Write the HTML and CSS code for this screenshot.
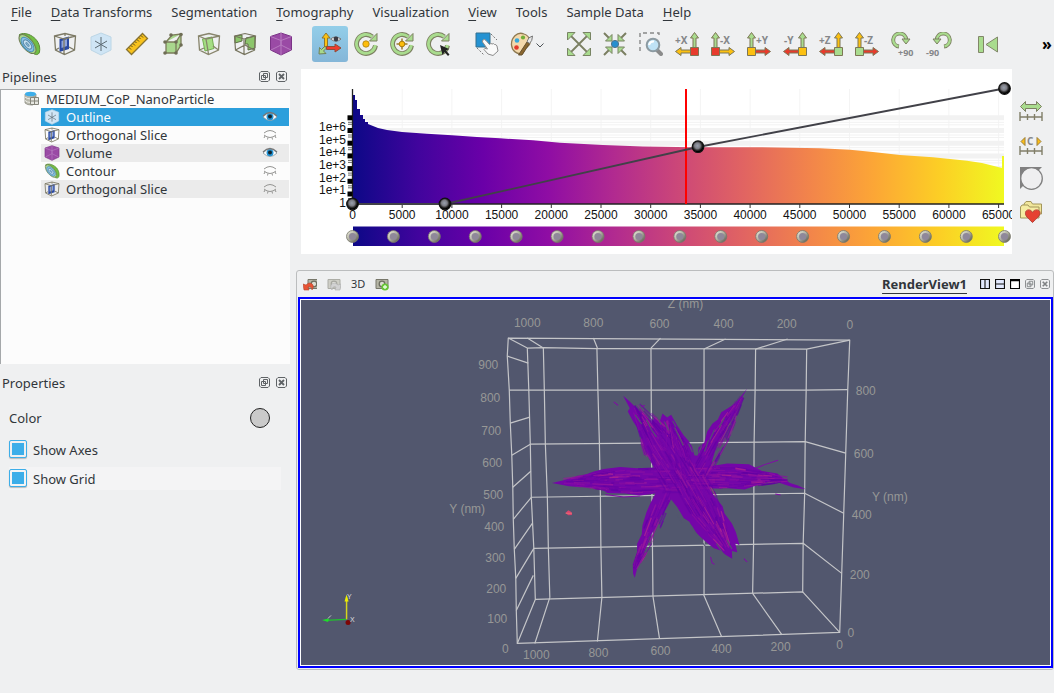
FILE: index.html
```html
<!DOCTYPE html>
<html lang="en">
<head>
<meta charset="utf-8">
<title>MEDIUM_CoP_NanoParticle</title>
<link rel="stylesheet" href="styles.css">
</head>
<body>
<svg class="sprite" aria-hidden="true">
  <defs>
    <linearGradient id="plasma">
      <stop offset="0" stop-color="#0d0887"/><stop offset=".1" stop-color="#41049d"/><stop offset=".2" stop-color="#6a00a8"/><stop offset=".3" stop-color="#8f0da4"/><stop offset=".4" stop-color="#b12a90"/><stop offset=".5" stop-color="#cc4778"/><stop offset=".6" stop-color="#e16462"/><stop offset=".7" stop-color="#f2844b"/><stop offset=".8" stop-color="#fca636"/><stop offset=".9" stop-color="#fcce25"/><stop offset="1" stop-color="#f0f921"/>
    </linearGradient>
    <linearGradient id="plasma-area" href="#plasma" gradientUnits="userSpaceOnUse" x1="353" x2="1004" y1="0" y2="0"/>
    <symbol id="contour" viewBox="0 0 24 24"><path d="M2 3C8-2 25 6 22.500 20 21.500 23.500 18 23 16 21Z" fill="#72bf44" stroke="#5d8a3a"/><ellipse cx="10.500" cy="12" rx="5.500" ry="11.500" transform="rotate(-40 10.500 12)" fill="#a9d58c" stroke="#6e7b52"/><ellipse cx="10.500" cy="12.500" rx="4.500" ry="8.500" transform="rotate(-40 10.500 12.500)" fill="#8bc0e6" stroke="#4a93bd"/><ellipse cx="10.500" cy="12.500" rx="2.800" ry="5.500" transform="rotate(-40 10.500 12.500)" fill="#c5e0f1" stroke="#5888a5"/><ellipse cx="10.500" cy="12.500" rx="1" ry="2.500" transform="rotate(-40 10.500 12.500)" fill="#7fb0d2" stroke="#5888a5" stroke-width=".7"/></symbol>
    <symbol id="slice" viewBox="0 0 24 24"><path d="M6.500 7 16 4.500V17L6.500 20Z" fill="#2b4aa3"/><path d="M8.500 9 14 7V14L8.500 16Z" fill="#8fa4dc"/><path d="M1.500 4 12 1.500 22.500 4 21.500 18 11.500 22.500 2.500 18ZM1.500 4 11 7 22.500 4M11 7V22M12 1.500V4M2.500 18 6 16M16 15 21.500 18" fill="none" stroke="#7d7a66" stroke-width="1.300"/></symbol>
    <symbol id="outline" viewBox="0 0 24 24"><path d="M12 1 22 5V18L12 23 2 18V5Z" fill="#cfe5f5" stroke="#bcd6e6"/><path d="M12 5V19M6 9 18 16M6 16 18 9" stroke="#5d6b73" fill="none"/></symbol>
    <symbol id="ruler" viewBox="0 0 24 24"><path d="M17.500 1.500 22.500 6.500 6.500 22.500 1.500 17.500Z" fill="#f8c21c" stroke="#8a7430" stroke-width="1.300"/><path d="M4 15.500 6 17.500M6 13.500 7.500 15M8 11.500 10 13.500M10 9.500 11.500 11M12 7.500 14 9.500M14 5.500 15.500 7M16 3.500 18 5.500" stroke="#5b4d20"/></symbol>
    <symbol id="clip" viewBox="0 0 24 24"><path d="M5 10 11 3 20 2 20 13 15 21H5ZM5 10H15L20 2M15 10V21" fill="#a9d68d" stroke="#7b7b5a" stroke-width="1.300"/><g fill="#6e6d55"><circle cx="4" cy="10" r="1.800"/><circle cx="10" cy="3" r="1.800"/><circle cx="20" cy="2.500" r="1.800"/><circle cx="15" cy="10" r="1.800"/><circle cx="15" cy="21" r="1.800"/><circle cx="4" cy="21" r="1.800"/><circle cx="20" cy="13" r="1.800"/></g></symbol>
    <symbol id="threshold" viewBox="0 0 24 24"><path d="M5.500 7 15 5 17 16.500 8 19Z" fill="#a5dd84" stroke="#74b052"/><path d="M1.500 4 12 1.500 22.500 4 21.500 18 11.500 22.500 2.500 18ZM1.500 4 9 7 22.500 4M9 7 11.500 22M2.500 18 7 16M16 14 21.500 18" fill="none" stroke="#88856c" stroke-width="1.300"/></symbol>
    <symbol id="cubes" viewBox="0 0 24 24"><path d="M2 4 9 3V9L2 11ZM13 6 22 4V16L15 18V12H12Z" fill="#8cc56b" stroke="#5c6f43"/><path d="M1.500 4 12 1.500 22.500 4 21.500 18 11.500 22.500 2.500 18ZM1.500 4 11 7 22.500 4M11 7V22M2.500 18 12 13 21 18" fill="none" stroke="#77755f" stroke-width="1.200"/></symbol>
    <symbol id="volume" viewBox="0 0 24 24"><path d="M12 1 22.500 4.500V18L12 23 1.500 18V4.500Z" fill="#9a4aa5" stroke="#7b3487"/><path d="M1.500 4.500 12 8.500 22.500 4.500M12 8.500V23M12 1V13L2 18M12 13 22 18" fill="none" stroke="#b77ac0"/></symbol>
    <symbol id="axes" viewBox="0 0 24 24"><path d="M8.500 16 5.500 19 8 21.500 1 22 1.500 15.500 3.500 17.500 7 14Z" fill="#a7d98b" stroke="#728156"/><path d="M6.500 15V6H4L8 1 12 6H9.500V14Z" fill="#fcc011" stroke="#8b7732"/><path d="M8.500 14.500H17V12L23 16 17 20V17.500H8.500Z" fill="#ee3b2c" stroke="#8f4c38"/><path d="M12.500 7Q17.500 3 23 7 18 11.500 12.500 7Z" fill="#f4f4f4" stroke="#777"/><circle cx="18" cy="7" r="2.400" fill="#3b3b45"/></symbol>
    <symbol id="arc" viewBox="0 0 24 24"><path d="M18.300 4.800A9.500 9.500 0 1 0 21.500 13.500" fill="none" stroke="#7d8062" stroke-width="4.800"/><path d="M18.300 4.800A9.500 9.500 0 1 0 21.400 13" fill="none" stroke="#a9dc8e" stroke-width="2.800"/><path d="M23 1.500V9H15.500Z" fill="#a9dc8e" stroke="#7d8062"/></symbol>
    <symbol id="rotate" viewBox="0 0 24 24"><use href="#arc"/><circle cx="12" cy="12" r="3.200" fill="#fdbd0b" stroke="#a87d10" stroke-width=".8"/></symbol>
    <symbol id="rotate-target" viewBox="0 0 24 24"><use href="#arc"/><path d="M12 6.500V17.500M6.500 12H17.500" stroke="#9a7c32" stroke-width="1.500"/><circle cx="12" cy="12" r="2.800" fill="#fdbd0b" stroke="#a87d10"/></symbol>
    <symbol id="rotate-pick" viewBox="0 0 24 24"><use href="#arc"/><path d="M14 13 23 17 20 18.500 23.500 22.500 22 24 18.500 20 16.500 23Z" fill="#222"/></symbol>
    <symbol id="touch" viewBox="0 0 24 24"><path d="M1 1H15V15H1Z" fill="#2492d2" stroke="#35708f"/><path d="M16 2 22 8M2 16 9 23" stroke="#777" stroke-width="1" stroke-dasharray="2 1.500"/><path d="M8 8Q9 6.500 11 8.500L14.500 12.500Q16 10.500 17 12 19 11 19.500 12.500 21 12 22 14L23 19 18 23.500 13 22 9 17.500Q9 15.500 12.500 17L7.500 10Q7 9 8 8Z" fill="#fafafa" stroke="#8b8b8b"/></symbol>
    <symbol id="palette" viewBox="0 0 24 24"><path d="M14 2C7-1 1 6 1.500 13 2 19 7 22.500 12 21.500 15 21 13 17.500 15 16 18 15 21 12 20 8 19 5 17 3 14 2Z" fill="#f4d9ac" stroke="#8f7a52" stroke-width="1.300"/><circle cx="7" cy="8.500" r="2.300" fill="#36a9dc"/><circle cx="13" cy="5.500" r="2.100" fill="#71ae38"/><circle cx="6.500" cy="15.500" r="2.300" fill="#e33a2b"/><path d="M17 10 19.500 11.500 12 23 8.500 23Z" fill="#8b672f" stroke="#65502e"/><path d="M17 9.500Q18 5 22.500 4 22.500 9 19.500 11.500Z" fill="#e8e8e8" stroke="#777"/></symbol>
    <symbol id="expand" viewBox="0 0 24 24"><path d="M4 4 20 20M20 4 4 20" stroke="#7b7f62" stroke-width="1.800"/><path d="M.500.500H8L.500 8ZM23.500.500H16L23.500 8ZM.500 23.500H8L.500 16ZM23.500 23.500H16L23.500 16Z" fill="#a9dc8e" stroke="#788463"/></symbol>
    <symbol id="collapse" viewBox="0 0 24 24"><path d="M1 1 6 6M23 1 18 6M1 23 6 18M23 23 18 18" stroke="#7b7f62" stroke-width="2"/><path d="M9 9H2.500L9 2.500ZM15 9H21.500L15 2.500ZM9 15H2.500L9 21.500ZM15 15H21.500L15 21.500Z" fill="#a9dc8e" stroke="#788463"/><circle cx="12" cy="12" r="3.600" fill="#268fd0" stroke="#527487"/></symbol>
    <symbol id="zoombox" viewBox="0 0 24 24"><path d="M1 19V1H20V5" fill="none" stroke="#888" stroke-width="1.400" stroke-dasharray="4 3"/><path d="M18 18 22 22" stroke="#8b8b8b" stroke-width="4" stroke-linecap="round"/><circle cx="14" cy="13" r="6.300" fill="#bfe2f5" stroke="#8c9aa1" stroke-width="2"/><path d="M10 13Q11 9 15 9.500" stroke="#fff" stroke-width="2" fill="none"/></symbol>
    <symbol id="view-left" viewBox="0 0 24 24"><path class="up" d="M18 16V6H15.500L19.500.500 23.500 6H21V16Z"/><path class="side" d="M15.500 18V21H6V23.500L.500 19.500 6 15.500V18Z"/><path class="origin" d="M15.500 15.500H23.500V23.500H15.500Z"/></symbol>
    <symbol id="view-right" viewBox="0 0 24 24"><path class="up" d="M3 16V6H.500L4.500.500 8.500 6H6V16Z"/><path class="side" d="M8.500 18V21H18V23.500L23.500 19.500 18 15.500V18Z"/><path class="origin" d="M.500 15.500H8.500V23.500H.500Z"/></symbol>
    <symbol id="turn" viewBox="0 0 24 24"><path d="M8 14.500A6.500 6.500 0 1 1 15.200 8" fill="none" stroke="#7d8062" stroke-width="4"/><path d="M7.500 14.300A6.500 6.500 0 1 1 15.200 8" fill="none" stroke="#a9dc8e" stroke-width="2.200"/><path d="M11 7H19L15 12Z" fill="#a9dc8e" stroke="#7d8062"/></symbol>
    <symbol id="first" viewBox="0 0 24 24"><path d="M2.500 4.500H7.500V20.500H2.500ZM21.500 5V20L10 12.500Z" fill="#a9dc8e" stroke="#818669"/></symbol>
    <symbol id="data" viewBox="0 0 16 16"><path d="M1 3V12Q3 14 7 14H9V6H12V3" fill="#b8b8ac" stroke="#85857a" stroke-width=".7"/><path d="M1 6Q3 8 7 8M1 9.500Q3 11.500 7 11.500" stroke="#f0f0ea" fill="none"/><ellipse cx="6.500" cy="3" rx="5.500" ry="2.300" fill="#3daee9"/><path d="M6.500 6.500H14.500V13.500H6.500ZM6.500 10H14.500M10.500 6.500V13.500" fill="#e7e7e1" stroke="#85857a"/></symbol>
    <symbol id="eye-open" viewBox="0 0 16 12"><path d="M1 6Q8-2 15 6 8 13 1 6Z" fill="#fff" stroke="#8a9499" stroke-width=".8"/><circle cx="8" cy="5.700" r="3.500" fill="#2492d2"/><circle cx="8" cy="5.500" r="2" fill="#10232d"/><path d="M1 5Q8-2 15 5" fill="none" stroke="#777" stroke-width="1.200"/></symbol>
    <symbol id="eye-shut" viewBox="0 0 16 12"><path d="M2 4Q8-1 14 4M2 6Q8 11 14 6M3 7 2 9M6 8.500 5.500 10.500M10 8.500 10.500 10.500M13 7 14 9" fill="none" stroke="#949492"/></symbol>
    <symbol id="float" viewBox="0 0 11 11"><path d="M2 .500H9L10.500 2V9L9 10.500H2L.500 9V2ZM4.500 2.500H8.500V6.500H4.500ZM2.500 4.500H6.500V8.500H2.500Z" fill="none" stroke="currentColor"/></symbol>
    <symbol id="close" viewBox="0 0 11 11"><path d="M2 .500H9L10.500 2V9L9 10.500H2L.500 9V2Z" fill="none" stroke="currentColor"/><path d="M3 3 8 8M8 3 3 8" stroke="currentColor" stroke-width="1.800"/></symbol>
    <symbol id="camera" viewBox="0 0 14 14"><path d="M1 2.500H13V11.500H1Z" fill="#b5b5a5" stroke="#77776a"/><circle cx="7" cy="7" r="2.800" fill="#ddddd2" stroke="#6d6d60" stroke-width="1.300"/></symbol>
    <symbol id="range" viewBox="0 0 24 24"><path d="M.800 19H23.200M1 14V23M8.500 16V22M15.500 16V22M23 14V23" stroke="#817e68" stroke-width="1.400" fill="none"/></symbol>
  </defs>
</svg>

<nav class="menubar" aria-label="Main menu">
  <button><u>F</u>ile</button><button><u>D</u>ata Transforms</button><button>Segmentation</button><button><u>T</u>omography</button><button>Vis<u>u</u>alization</button><button><u>V</u>iew</button><button>Tools</button><button>Sample Data</button><button><u>H</u>elp</button>
</nav>

<div class="toolbar" role="toolbar" aria-label="Tools">
  <div class="group">
    <button aria-label="Contour"><svg><use href="#contour"/></svg></button><button aria-label="Orthogonal slice"><svg><use href="#slice"/></svg></button><button aria-label="Outline"><svg><use href="#outline"/></svg></button><button aria-label="Ruler"><svg><use href="#ruler"/></svg></button><button aria-label="Clip"><svg><use href="#clip"/></svg></button><button aria-label="Scale cube"><svg><use href="#threshold"/></svg></button><button aria-label="Threshold"><svg><use href="#cubes"/></svg></button><button aria-label="Volume"><svg><use href="#volume"/></svg></button>
  </div>
  <div class="group">
    <button class="active" aria-pressed="true" aria-label="Show orientation axes"><svg><use href="#axes"/></svg></button><button aria-label="Show center"><svg><use href="#rotate"/></svg></button><button aria-label="Reset center"><svg><use href="#rotate-target"/></svg></button><button aria-label="Pick center"><svg><use href="#rotate-pick"/></svg></button>
  </div>
  <div class="group">
    <button aria-label="Interact"><svg><use href="#touch"/></svg></button><button class="with-arrow" aria-label="Palette"><svg><use href="#palette"/></svg><svg class="arrow" viewBox="0 0 8 8"><path d="M.500 3.500 4 7 7.500 3.500" fill="none" stroke="#4d5256"/></svg></button>
  </div>
  <div class="group">
    <button aria-label="Reset camera"><svg><use href="#expand"/></svg></button><button aria-label="Zoom to data"><svg><use href="#collapse"/></svg></button><button aria-label="Zoom to box"><svg><use href="#zoombox"/></svg></button>
    <button><svg viewBox="0 0 24 24"><use href="#view-left"/><text x="0" y="12">+X</text></svg></button>
    <button><svg viewBox="0 0 24 24"><use href="#view-right"/><text x="9" y="12">-X</text></svg></button>
    <button class="yellow-origin"><svg viewBox="0 0 24 24"><use href="#view-right"/><text x="9" y="12">+Y</text></svg></button>
    <button class="yellow-origin"><svg viewBox="0 0 24 24"><use href="#view-left"/><text x="1" y="12">-Y</text></svg></button>
    <button class="green-origin"><svg viewBox="0 0 24 24"><use href="#view-left"/><text x="0" y="12">+Z</text></svg></button>
    <button class="green-origin"><svg viewBox="0 0 24 24"><use href="#view-right"/><text x="9" y="12">-Z</text></svg></button>
    <button class="turn"><svg viewBox="0 0 24 24"><use href="#turn"/><text x="7" y="24">+90</text></svg></button>
    <button class="turn"><svg viewBox="0 0 24 24"><use href="#turn" transform="translate(25 0) scale(-1 1)"/><text x="-1" y="24">-90</text></svg></button>
  </div>
  <div class="group"><button aria-label="First frame"><svg><use href="#first"/></svg></button></div>
  <button class="more" aria-label="More tools">»</button>
</div>

<main class="workspace">
  <aside class="docks">
    <section class="pipelines">
      <header class="dock-title"><h2>Pipelines</h2><button aria-label="Float"><svg><use href="#float"/></svg></button><button aria-label="Close"><svg><use href="#close"/></svg></button></header>
      <ul class="tree">
        <li class="root"><svg class="kind"><use href="#data"/></svg><span>MEDIUM_CoP_NanoParticle</span></li>
        <li class="selected"><svg class="kind"><use href="#outline"/></svg><span>Outline</span><button aria-label="Hide Outline"><svg><use href="#eye-open"/></svg></button></li>
        <li><svg class="kind"><use href="#slice"/></svg><span>Orthogonal Slice</span><button aria-label="Show slice"><svg><use href="#eye-shut"/></svg></button></li>
        <li class="alt"><svg class="kind"><use href="#volume"/></svg><span>Volume</span><button aria-label="Hide Volume"><svg><use href="#eye-open"/></svg></button></li>
        <li><svg class="kind"><use href="#contour"/></svg><span>Contour</span><button aria-label="Show Contour"><svg><use href="#eye-shut"/></svg></button></li>
        <li class="alt"><svg class="kind"><use href="#slice"/></svg><span>Orthogonal Slice</span><button aria-label="Show slice"><svg><use href="#eye-shut"/></svg></button></li>
      </ul>
    </section>
    <section>
      <header class="dock-title"><h2>Properties</h2><button aria-label="Float"><svg><use href="#float"/></svg></button><button aria-label="Close"><svg><use href="#close"/></svg></button></header>
      <div class="properties">
        <div class="color-row"><label for="color">Color</label><button id="color" class="swatch" aria-label="Color"></button></div>
        <div class="check-row"><input type="checkbox" id="axes-on" checked><label for="axes-on">Show Axes</label></div>
        <div class="check-row alt"><input type="checkbox" id="grid-on" checked><label for="grid-on">Show Grid</label></div>
      </div>
    </section>
  </aside>

  <div class="views">
    <section class="histogram">
      <svg id="chart" viewBox="301 69 711 185" role="img" aria-label="Histogram and opacity">
        <defs>
          <radialGradient id="knob" cx=".45" cy=".42"><stop offset="0" stop-color="#98a0ac"/><stop offset=".5" stop-color="#7c7c84"/><stop offset=".75" stop-color="#333"/><stop offset="1" stop-color="#000"/></radialGradient>
          <linearGradient id="stud" x1="0" y1="0" x2="1" y2="1"><stop offset="0" stop-color="#f2f2e4"/><stop offset=".45" stop-color="#b5b5a6"/><stop offset="1" stop-color="#4c4c40"/></linearGradient>
        </defs>
        <g id="chart-grid"></g>
        <path fill="url(#plasma-area)" d="M353 204V95H355V100H357V109H360V115H363V119H365V122H368V124L373 126 378 128 387 130 402 132 427 133.700 452 135.300 477 137 500 138.300 533 140.300 560 142.700 603 145 643 146.500 693 147.300H760L820 148.300 850 149.700 873 152 900 155 933 157.300 967 160.700 982 163 1002 168V156H1004V204Z"/>
        <path d="M352.500 89V204H1004" fill="none" stroke="#222" stroke-width="1.300"/>
        <g id="chart-axis"></g>
        <path d="M686 89V204" stroke="#f00" stroke-width="2"/>
        <path d="M352 204H445L698 147 1004 88.500" fill="none" stroke="#414148" stroke-width="1.800"/>
        <path d="M353 226.500H1004V246H353Z" fill="url(#plasma-area)"/>
        <g id="chart-handles"></g>
      </svg>
      <div class="chart-tools">
        <button aria-label="Reset range"><svg viewBox="0 0 24 24"><use href="#range"/><path d="M1.500 8.500 6.500 3.500V6.500H17.500V3.500L22.500 8.500 17.500 13.500V10.500H6.500V13.500Z" fill="#a9dc8e" stroke="#7d8062"/></svg></button>
        <button aria-label="Custom range"><svg viewBox="0 0 24 24"><use href="#range"/><path d="M2 9.500 6 5.500V13.500ZM22 9.500 18 5.500V13.500Z" fill="#fcbd16" stroke="#9a7e3a"/><text x="8" y="13">C</text></svg></button>
        <button aria-label="Invert"><svg viewBox="0 0 24 24"><path d="M1 23V1H23Z" fill="#808080"/><circle cx="12.500" cy="12.500" r="10.800" fill="#efeff0" stroke="#808080" stroke-width="1.300"/></svg></button>
        <button aria-label="Presets"><svg viewBox="0 0 24 24"><path d="M5 14V4L7 1.500H12L13.500 4H22.500V14Z" fill="#f1e79c" stroke="#a3965b"/><path d="M1.500 18V7L3 5H9L10.500 7H20V18Z" fill="#f5eca3" stroke="#a3965b"/><path d="M13.500 22.500C9 18 6 16 6.500 12.500 7 9 12 9 13.500 12.500 15 9 20.500 9 21 12.500 21 16 18 18 13.500 22.500Z" fill="#e64232" stroke="#b4423a"/></svg></button>
      </div>
    </section>

    <section class="render">
      <header class="render-head">
        <button class="small" aria-label="Undo camera"><svg viewBox="0 0 14 14"><svg x="4" y="0" width="10" height="10"><use href="#camera"/></svg><path d="M1 13 0 7 3 8Q7 4 10 8 11 10 9 13 9 9 5 10L6 13Z" fill="#e95435" stroke="#b1462f" stroke-width=".6"/></svg></button>
        <button class="small" aria-label="Redo camera"><svg viewBox="0 0 14 14" opacity=".55"><svg width="10" height="10"><use href="#camera"/></svg><path d="M13 13 14 7 11 8Q7 4 4 8 3 10 5 13 5 9 9 10L8 13Z" fill="#bbb" stroke="#777" stroke-width=".6"/></svg></button>
        <button class="mode">3D</button>
        <button class="small" aria-label="Adjust camera"><svg viewBox="0 0 14 14"><use href="#camera"/><circle cx="10" cy="10" r="3.600" fill="#67c535"/><path d="M8 10H12M10 8V12" stroke="#e8ffe0" stroke-width="1.300"/></svg></button>
        <h2>RenderView1</h2>
        <div class="splits">
          <button aria-label="Split horizontal"><svg viewBox="0 0 9 9"><path d="M.500.500H8.500V8.500H.500ZM4.500 0V9" fill="#e3eaff" stroke="#111"/></svg></button><button aria-label="Split vertical"><svg viewBox="0 0 9 9"><path d="M.500.500H8.500V8.500H.500ZM0 4.500H9" fill="#e3eaff" stroke="#111"/></svg></button><button aria-label="Maximize"><svg viewBox="0 0 9 9"><path d="M.500.500H8.500V8.500H.500ZM0 1.500H9" fill="#fff" stroke="#000"/></svg></button><button class="dim" aria-label="Float"><svg><use href="#float"/></svg></button><button class="dim" aria-label="Close"><svg><use href="#close"/></svg></button>
        </div>
      </header>
      <div class="canvas">
        <svg viewBox="301 300 748 365" preserveAspectRatio="xMidYMid slice" role="img" aria-label="Volume rendering">
          <g class="box">
            <path d="M508 338 849 340 847 390 845 453 843 513 841 573 839 632 517 643 516 610 515.500 578 514 549 513 519 512.500 487 511.500 455 510 423 509 390 507 356Z"/>
            <path d="M508 338 527 348 528.500 390 530 444 531 497 533.500 548 535 599 517 643M535 599 802 591.500 839 632M527 348 543 347.500 596 348.500 806 349 849 340"/>
            <path d="M543 347 544 390 545 443 547 496 548 547 549.500 597M596.500 348 597.500 390 599 443 600 496 600.500 547 601.500 597M650.500 348 651 442 651.500 496 652.500 596M703.500 349V594M755 349 754.500 390 753.500 442 753 543 752 593M806 349 805.500 390 804.500 442 804 493 802.500 543 802 592"/>
            <path d="M509 390H805L847 389.500M530 444 702 442.500 804.500 441.500 845 453M531 497 804 493 843 513M533.500 548 802.500 543 841 573"/>
            <path d="M507 356 528 363M510 423 529.500 417M511.500 455 530 444M512.500 487 530.500 471M513 519 531 497M514 549 532 523M515.500 578 533.500 548M516 610 533 575M549.500 597 534.500 643M601.500 597 597 641M652.500 596 659 638M703 594 721 636M752 593 781 634M527 338 543 348M593 338 597 348M660 338 650.500 348M725 339 703.500 349M787 339 755 349"/>
          </g>
          <g class="crystal" transform="translate(540 380) scale(.3333)">
            <path d="M248 47 268 64 292 88 318 106 334 128 342 112 358 124 366 100 380 112 392 104 410 136 430 166 444 182 454 198 462 226 472 226 474 202 492 186 500 154 516 130 532 118 542 96 562 84 584 70 620 25 596 66 586 96 566 130 548 164 528 198 510 258 560 250 625 252 644 262 664 272 710 280 728 294 748 308 772 316 795 327 760 322 736 314 700 302 668 310 640 318 612 328 560 324 508 324 520 346 546 378 552 400 574 430 586 456 597 495 584 488 590 516 574 512 575 535 556 524 538 510 520 504 500 488 480 470 462 452 446 424 430 414 410 380 392 358 376 388 352 420 344 446 324 474 316 500 304 530 292 556 283 592 278 580 277 552 290 514 290 490 304 462 306 436 318 396 330 368 345 340 300 346 254 340 200 338 182 324 130 320 86 318 35 308 70 300 110 288 132 284 160 274 190 266 240 260 290 264 340 262 326 236 312 206 304 182 290 142 278 124 262 94 268 84Z" fill="#7406a8"/>
            <g id="fibres" fill="none"></g>
            <path d="M318 118 334 150 348 170M352 112 362 134M372 124 384 150M402 142 420 178 428 196M396 122 406 140M284 104 304 132M504 180 492 214M522 148 508 178M552 112 536 142M444 190 456 216M474 474 502 506M528 490 548 520M560 480 574 506M452 436 470 464M484 196 474 220M410 404 424 428" fill="none" stroke="#52576e" stroke-width="3"/>
            <path d="M220 65 233 76M302 79 313 76M645 264 670 254 712 240M510 530 515 548 522 552M704 341 720 344M610 535 620 545M195 343 250 350 298 347" fill="none" stroke="#810ca6" stroke-width="3"/>
            <path d="M75 398 84 390 94 396 95 404 84 405Z" fill="#d84570"/><path d="M76 399H95" stroke="#f28075" stroke-width="2"/>
          </g>
          <g id="axis-labels" class="labels"></g>
          <g><path d="M346.500 619V597" stroke="#d6d61c" stroke-width="1.500"/><path d="M344.500 601 346.500 594 348.500 601Z" fill="#ee0"/><path d="M346 619 325 620" stroke="#1fc42b" stroke-width="1.300"/><path d="M322 619.500 329 618 328 621.500Z" fill="#1fdd2b"/><circle cx="348" cy="622" r="2.500" fill="#7d0606"/><text class="tiny" x="347" y="599">Y</text><text class="tiny" x="350" y="622">X</text><path d="M328 618 331 615" stroke="#ddd" stroke-width=".8"/></g>
        </svg>
      </div>
    </section>
  </div>
</main>
<script src="plots.js"></script>
</body>
</html>
```
FILE: styles.css
```css
* { box-sizing: border-box; }
body {
  margin: 0;
  min-height: 100vh;
  display: flex;
  flex-direction: column;
  background: #eff0f1;
  color: #31363b;
  font: 13px/18px "Noto Sans", sans-serif;
}
button {
  margin: 0;
  padding: 0;
  border: 0;
  background: none;
  color: inherit;
  font: inherit;
}
svg { display: block; }
h2 { margin: 0; font: inherit; }
.sprite { position: absolute; width: 0; height: 0; }

.menubar { display: flex; gap: 1px; height: 26px; padding: 0 0 2px 2px; }
.menubar button { padding: 0 9px; white-space: nowrap; }
.menubar u { text-underline-offset: 3px; }

.toolbar { display: flex; gap: 13px; height: 40px; padding-left: 11px; }
.group { display: flex; }
.toolbar button {
  display: flex;
  align-items: center;
  justify-content: center;
  width: 36px;
  height: 36px;
}
.toolbar svg { width: 24px; height: 24px; overflow: visible; }
.toolbar .active { border-radius: 3px; background: linear-gradient(#93cee9, #84b6d8); }
.toolbar .with-arrow { width: 43px; gap: 2px; }
.toolbar .arrow { width: 8px; height: 8px; }
.toolbar .more { width: 14px; margin-left: auto; color: #000; font-size: 16px; font-weight: bold; }
.toolbar text, .chart-tools text {
  fill: #85878a;
  font: bold 10px "Noto Sans", sans-serif;
}
.up, .side, .origin { stroke: #7d7655; stroke-width: 1; }
.yellow-origin { --side: #e73b2c; --origin: #fcc011; }
.green-origin { --up: #fcc011; --side: #e73b2c; --origin: #a9dc8e; }
.up { fill: var(--up, #a9dc8e); }
.side { fill: var(--side, #fcc011); }
.origin { fill: var(--origin, #e73b2c); }
.toolbar .turn text { font-size: 9px; }

.workspace { flex: 1; display: flex; gap: 6px; padding-bottom: 23px; }
.docks { width: 290px; flex: none; }
.dock-title {
  display: flex;
  align-items: center;
  gap: 6px;
  height: 23px;
  padding: 0 3px 2px 2px;
}
.dock-title h2 { flex: 1; }
.dock-title svg, .dim svg { width: 11px; height: 11px; }
.dock-title button { color: #5f6366; }
.pipelines { margin-bottom: 8px; }
.tree {
  min-height: 275px;
  margin: 0;
  padding: 0 1px 0 0;
  list-style: none;
  background: #fcfcfc;
  border: solid #a5a8aa;
  border-width: 1px 0 0 1px;
}
.tree li { display: flex; align-items: center; height: 18px; margin-left: 40px; padding: 0 11px 0 3px; }
.tree .root { margin-left: 20px; }
.tree .alt { background: #ebebeb; }
.tree .selected { background: #2c9fdc; color: #fcfcfc; }
.tree span { flex: 1; margin-left: 6px; }
.kind { width: 16px; height: 16px; }
.tree button svg { width: 16px; height: 12px; }

.properties { padding: 9px 9px 0; }
.color-row { display: flex; align-items: center; justify-content: space-between; padding-right: 11px; height: 28px; }
.swatch { width: 20px; height: 20px; border: 1px solid #222; border-radius: 50%; background: #cacaca; }
.check-row { display: flex; align-items: center; gap: 6px; height: 23px; margin-top: 6px; }
.check-row.alt { background: #f4f4f5; }
.check-row input {
  appearance: none;
  width: 18px;
  height: 18px;
  margin: 0 0 1px;
  border: 1px solid #3daee9;
  border-radius: 2px;
  background: #eff0f1;
  box-shadow: 0 1px 1px #bbb;
}
.check-row input:checked { background: #3daee9; background-clip: content-box; padding: 2px; }

.views { flex: 1; min-width: 0; display: flex; flex-direction: column; padding-top: 3px; }
.histogram { display: flex; padding-left: 5px; }
#chart { flex: 1; min-width: 0; background: #fff; }
#chart text { font: 12px "Liberation Sans", sans-serif; fill: #111; }
.chart-tools { display: flex; flex-direction: column; gap: 10px; width: 42px; padding: 29px 0 0 7px; }
.chart-tools svg { width: 24px; height: 24px; }

.render {
  flex: 1;
  display: flex;
  flex-direction: column;
  margin-top: 16px;
  padding: 0 0 1px 1px;
  border: 1px solid #bbbdbe;
  border-radius: 3px;
}
.render-head { display: flex; align-items: center; height: 26px; padding-left: 5px; }
.render-head .small { margin-right: 10px; }
.render-head .small svg { width: 14px; height: 14px; }
.mode { width: 14px; margin-right: 10px; font-size: 11px; }
.render-head h2 { flex: 1; text-align: right; font-weight: bold; text-decoration: underline; text-underline-offset: 4px; }
.splits { display: flex; align-items: center; gap: 5px; padding: 0 3px 0 13px; }
.splits svg { width: 10px; height: 10px; }
.dim { color: #7f8284; }
.canvas { flex: 1; display: flex; padding: 1px; border: 2px solid #00f; background: #fff; }
.canvas > svg { flex: 1; min-width: 0; width: 100%; height: 100%; background: #52576e; }
.box path { fill: none; stroke: #c4c5c8; stroke-width: 1.2; stroke-linejoin: round; }
.labels text { font: 12px "Liberation Sans", sans-serif; fill: #979796; text-anchor: middle; }
.tiny { font: 7px "Liberation Sans", sans-serif; fill: #ddd; }
```
FILE: plots.js
```js
const NS = "http://www.w3.org/2000/svg";
function add(parent, tag, attrs, text) {
  const el = document.createElementNS(NS, tag);
  for (const k in attrs) el.setAttribute(k, attrs[k]);
  if (text !== undefined) el.textContent = text;
  document.getElementById(parent).appendChild(el);
}

// Histogram: value axis, every 5000 counts
const step = 49.7;
for (let i = 0; i <= 13; i++) {
  const x = 352.5 + i * step;
  if (i) add("chart-grid", "path", { d: `M${x} 89V204`, stroke: "#f4f4f4" });
  add("chart-axis", "path", { d: `M${x} 204V208`, stroke: "#333" });
  add("chart-axis", "text", { x, y: 219, "text-anchor": "middle" }, String(i * 5000));
}
// Log axis, one decade per label
const decades = ["1", "1e+1", "1e+2", "1e+3", "1e+4", "1e+5", "1e+6"];
for (let i = 0; i <= 6; i++) {
  const y = 203 - i * 12.7;
  add("chart-axis", "text", { x: 346, y: y + 4, "text-anchor": "end" }, decades[i]);
  const top = y - 11.5;
  add("chart-axis", "path", { d: `M350 ${top}V${top + 5}`, stroke: "#000", "stroke-width": 5 });
  add("chart-axis", "path", { d: `M348 ${top + 7}H352M348 ${top + 9}H352`, stroke: "#666" });
  add("chart-grid", "path", { d: `M353 ${top + 2.5}H1004`, stroke: "#f2f2f2", "stroke-width": 5 });
  add("chart-grid", "path", { d: `M353 ${top + 7}H1004M353 ${top + 9.5}H1004`, stroke: "#f2f2f2" });
}
for (const [cx, cy] of [[352.5, 204], [445, 204], [698, 146.7], [1004.5, 88.5]]) {
  add("chart-handles", "circle", { cx, cy, r: 5.8, fill: "url(#knob)", stroke: "#111", "stroke-width": 1.2 });
}
for (let i = 0; i < 17; i++) {
  const cx = Math.min(352.5 + i * 40.92, 1004.5);
  add("chart-handles", "circle", { cx, cy: 236.5, r: 6, fill: "url(#stud)", stroke: "#77776b", "stroke-width": 0.8 });
  add("chart-handles", "circle", { cx, cy: 236.5, r: 3.6, fill: "#8f889a" });
}

// Cube axis labels
[
  [527, 323, "1000"], [593, 323, "800"], [659, 324, "600"], [723, 324, "400"], [786, 324, "200"], [849, 325, "0"],
  [488, 365, "900"], [490, 398, "800"], [491, 431, "700"], [492, 463, "600"], [493, 495, "500"], [494, 527, "400"],
  [495, 558, "300"], [496, 589, "200"], [497, 619, "100"], [505, 649, "0"],
  [865, 391, "800"], [863, 454, "600"], [861, 515, "400"], [859, 575, "200"], [850, 633, "0"],
  [536, 655, "1000"], [598, 653, "800"], [660, 651, "600"], [721, 649, "400"], [780, 647, "200"], [839, 645, "0"],
  [467, 509, "Y (nm)"], [889, 497, "Y (nm)"], [685, 304, "Z (nm)"]
].forEach(([x, y, s]) => add("axis-labels", "text", { x, y: y + 4 }, s));

// Crystal fibres run parallel along each arm: start, end, half width, count
let seed = 7;
const rnd = () => (seed = (seed * 16807) % 2147483647) / 2147483647;
const tones = ["#5f02a2", "#6a03a6", "#7c08a8", "#8a0da5", "#9a189c", "#6703a6"];
[
  [380, 330, 284, 565, 24, 60], [430, 300, 65, 304, 36, 150], [430, 290, 740, 296, 34, 130],
  [470, 290, 605, 50, 30, 90], [430, 310, 285, 75, 58, 130], [430, 290, 385, 120, 34, 60],
  [420, 250, 562, 505, 50, 170]
].forEach(([x1, y1, x2, y2, half, count]) => {
  const dx = x2 - x1, dy = y2 - y1, len = Math.hypot(dx, dy);
  for (let i = 0; i < count; i++) {
    const side = rnd() * 2 - 1;
    const t = rnd() * 0.85;
    const u = Math.min(1, t + (20 + rnd() * 45) / len);
    const at = v => {
      const taper = v < 0.5 ? 1 : 1 - (v - 0.5) * 1.5;
      const off = side * half * taper;
      return [x1 + dx * v - dy / len * off, y1 + dy * v + dx / len * off].map(n => n.toFixed(1)).join(" ");
    };
    const hot = t > 0.35 && rnd() > 0.93;
    add("fibres", "path", {
      d: `M${at(t)}L${at(u)}`,
      stroke: hot ? "#b92c8c" : tones[Math.floor(rnd() * tones.length)],
      "stroke-width": 2 + Math.round(rnd() * 3),
      "stroke-opacity": 0.65
    });
  }
});
```
